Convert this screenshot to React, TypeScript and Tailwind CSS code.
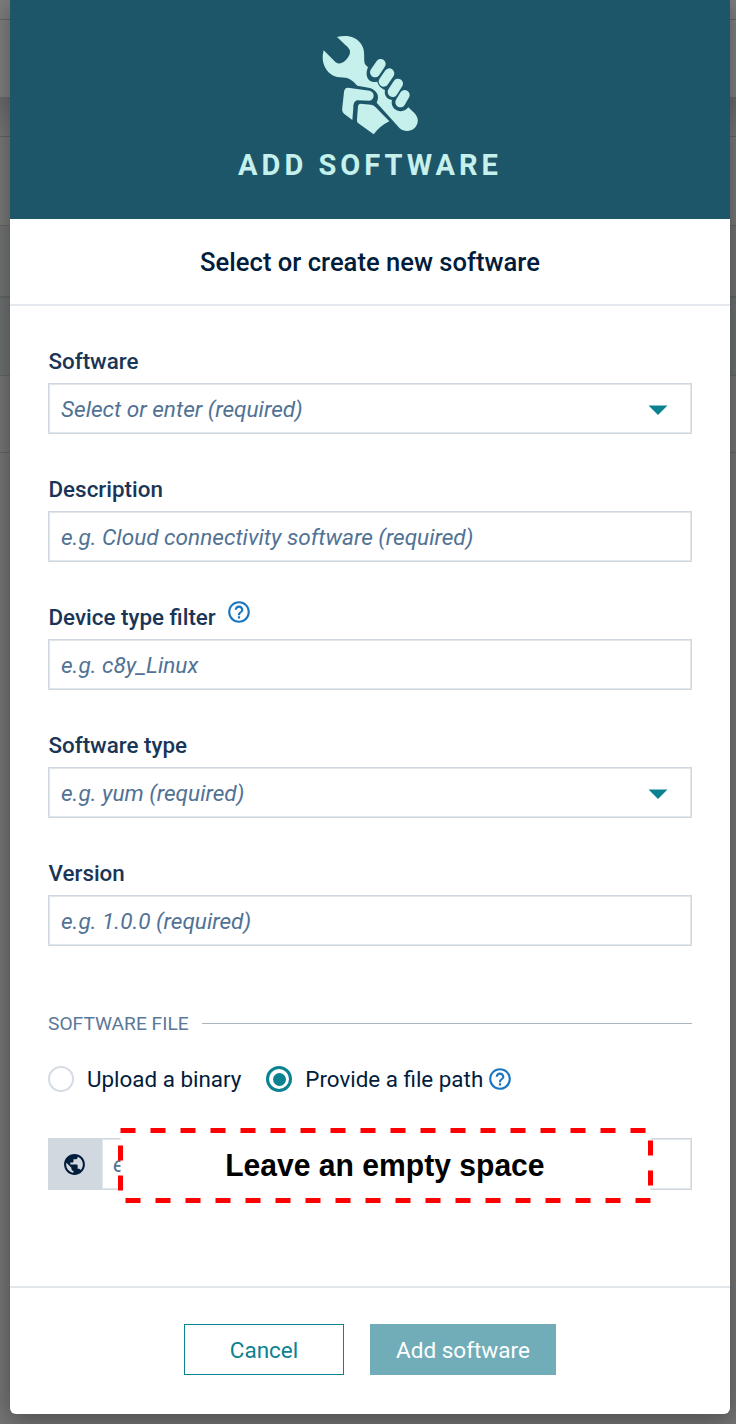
import type { ReactNode } from "react";
import { MdHelpOutline, MdPublic } from "react-icons/md";

function Backdrop() {
  return (
    <div className="col-start-1 row-start-1 flex flex-col bg-[#747474]">
      <div className="h-5 border-b border-[#646464] bg-[#7c7c7c]" />
      <div className="h-[77px] bg-[#7e7e7e]" />
      <div className="h-10 border-b border-[#626262] bg-linear-to-b from-[#68696b] to-[#767676]" />
      <div className="h-[89px] border-b border-[#636464] bg-[#777777]" />
      <div className="h-[72px] border-b-2 border-[#636666] bg-[#717373]" />
      <div className="h-[78px] border-b border-[#636565] bg-[#6d7070]" />
      <div className="h-[77px] border-b border-[#636363] bg-[#747474]" />
      <div className="grow bg-[#747474]" />
    </div>
  );
}

function FistWrench() {
  return (
    <svg width="140" height="130" viewBox="0 0 420 390" fill="#c5f0ec" aria-hidden="true">
      <path d="M111 51C140 44 168 49 184 73C198 94 189 117 195 133L204 142C198 156 198 171 207 180C214 187 224 187 232 185C234 196 244 205 255 210C252 224 259 237 276 240C272 256 281 270 297 273C309 276 319 270 325 262L343 279C358 294 356 312 343 325C331 336 311 336 299 325L230 248C240 229 231 211 210 204L172 197C160 184 151 175 136 173C112 173 94 169 80 150C68 134 65 112 71 91L107 127C113 133 123 130 132 125C145 115 151 103 150 94C150 88 143 81 137 76Z" />
      <path d="M144 203L209 212C224 215 226 237 209 242L173 241C162 243 160 252 160 264L157 300L132 281C126 276 126 270 127 262L132 216C133 207 137 203 144 203Z" />
      <path d="M181 251L213 254Q221 255 227 262L268 304Q239 318 221 343L173 308Q170 306 171 298L174 259Q175 251 181 251Z" />
      <g fill="none" stroke="#c5f0ec" strokeWidth="30" strokeLinecap="round">
        <path d="M242 132L225 157" />
        <path d="M268 160L251 185" />
        <path d="M294 191L278 216" />
        <path d="M314 225L301 247" />
      </g>
    </svg>
  );
}

function Field({
  label,
  placeholder,
  caret,
  help,
}: {
  label: string;
  placeholder: string;
  caret?: boolean;
  help?: boolean;
}) {
  return (
    <div className="flex h-32 flex-col">
      <div className="flex h-[37px] pt-px pl-[0.5px] text-[22.4px] leading-[28px] font-medium text-[#1a3556]">
        <span>{label}</span>
        {help && <MdHelpOutline className="-mt-1 ml-[10px] size-[26px] text-[#1776bf]" />}
      </div>
      <div className="flex h-[51px] items-center justify-between border border-[#d0d7df] bg-white pr-[23px] pl-[12px] shadow-[inset_0_0_0_1px_#e1e6eb]">
        <span className="pt-0.5 text-[22.6px] text-[#517294] italic">{placeholder}</span>
        {caret && (
          <svg width="20" height="10" viewBox="0 0 20 10" fill="#0b8290" className="mt-0.5" aria-hidden="true">
            <path d="M0.5 0.5H19.5L10 10Z" />
          </svg>
        )}
      </div>
    </div>
  );
}

function Choice({ checked, children }: { checked?: boolean; children: ReactNode }) {
  return (
    <div className="flex items-center gap-[13px]">
      {checked ? (
        <span className="flex size-[26px] items-center justify-center rounded-full border-[3px] border-[#0b8290]">
          <span className="size-[13px] rounded-full bg-[#0b8290]" />
        </span>
      ) : (
        <span className="size-[26px] rounded-full border-2 border-[#d5dbe3]" />
      )}
      <span className="pt-0.5">{children}</span>
    </div>
  );
}

export default function App() {
  return (
    <div className="grid h-[1424px] w-[736px] overflow-hidden font-['Roboto',sans-serif]">
      <Backdrop />
      <div className="z-10 col-start-1 row-start-1 mr-[6px] ml-[10px] flex h-[1414px] flex-col overflow-hidden rounded-b-[6px] bg-white shadow-[0_6px_24px_rgba(0,0,0,0.35)]">
        <header className="flex h-[219px] flex-col items-center bg-[#1d5669] pt-5">
          <FistWrench />
          <h1 className="-mt-[1px] text-[29px] leading-[32px] font-bold tracking-[4px] text-[#c5f0ec]">ADD SOFTWARE</h1>
        </header>
        <div className="flex h-[87px] items-center justify-center border-b-2 border-[#e5e8ee] pt-0.5 text-[25.6px] font-medium text-[#021c3b]">
          <h2>Select or create new software</h2>
        </div>
        <main className="flex h-[980px] flex-col px-[38px] pt-10">
          <Field label="Software" placeholder="Select or enter (required)" caret />
          <Field label="Description" placeholder="e.g. Cloud connectivity software (required)" />
          <Field label="Device type filter" placeholder="e.g. c8y_Linux" help />
          <Field label="Software type" placeholder="e.g. yum (required)" caret />
          <Field label="Version" placeholder="e.g. 1.0.0 (required)" />
          <div className="mt-[22px] flex h-[30px] items-center gap-[13px] text-[19.2px] text-[#5b7898]">
            <span className="pt-[3px]">SOFTWARE FILE</span>
            <span className="h-px grow bg-[#a9b6c2]" />
          </div>
          <div className="mt-[26px] flex h-[30px] items-center text-[22.4px] text-[#021c3b]">
            <Choice>Upload a binary</Choice>
            <span className="w-[25px]" />
            <Choice checked>Provide a file path</Choice>
            <MdHelpOutline className="ml-[4px] size-[26px] text-[#1776bf]" />
          </div>
          <div className="relative mt-[44px] flex h-[52px]">
            <div className="flex w-[54px] items-center justify-center bg-[#d1d8e0] pr-px">
              <MdPublic className="size-[25px] text-[#021c3b]" />
            </div>
            <div className="grow border border-l-0 border-[#d0d7df] pt-[9px] pl-[11px] text-[22.6px] text-[#517294] italic shadow-[inset_0_0_0_1px_#e1e6eb]">
              e
            </div>
            <div className="absolute -top-[10px] left-[70px] flex h-[75px] w-[535px] items-center justify-center">
              <svg className="absolute inset-0" width="535" height="75" aria-hidden="true">
                <rect x="2.5" y="2.5" width="530" height="70" fill="#fff" stroke="#fe0000" strokeWidth="5" strokeDasharray="15 15" />
              </svg>
              <span className="relative scale-x-[0.94] pr-px pb-0.5 font-['Liberation_Sans',sans-serif] text-[32px] font-bold whitespace-nowrap text-black">Leave an empty space</span>
            </div>
          </div>
        </main>
        <footer className="flex grow items-start justify-center gap-[26px] border-t-2 border-[#e1e6eb] pt-[36px] text-[22.5px]">
          <button className="h-[51px] w-[160px] border border-[#0b8290] pt-[3px] text-[#0b8290]">Cancel</button>
          <button className="h-[51px] w-[186px] bg-[#71adb9] pt-[3px] text-white">Add software</button>
        </footer>
      </div>
    </div>
  );
}
